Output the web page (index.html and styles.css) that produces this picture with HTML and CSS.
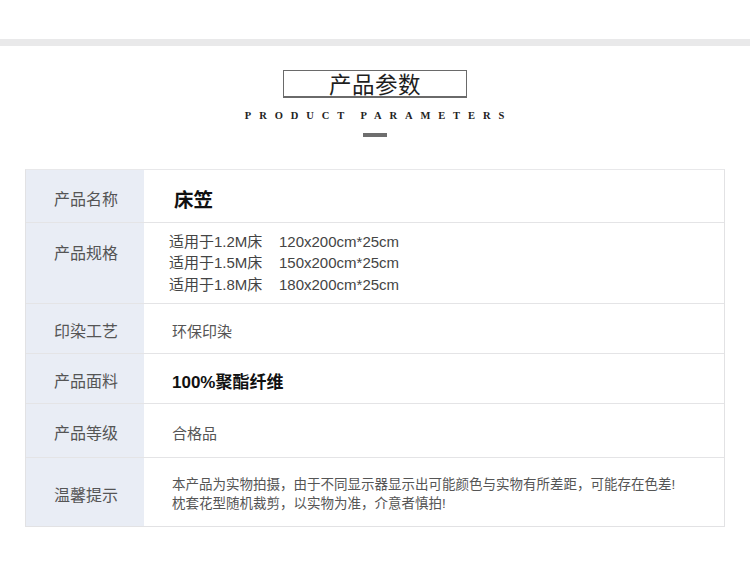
FILE: index.html
```html
<!DOCTYPE html>
<html lang="zh-CN">
<head>
<meta charset="utf-8">
<title>产品参数</title>
<link rel="stylesheet" href="styles.css">
</head>
<body>
<div class="topbar"></div>
<header class="heading">
  <div class="title-box">产品参数</div>
  <div class="subtitle">PRODUCT PARAMETERS</div>
  <div class="dash"></div>
</header>
<section class="table">
  <div class="row row-name">
    <div class="label">产品名称</div>
    <div class="value value-strong">床笠</div>
  </div>
  <div class="row row-spec">
    <div class="label">产品规格</div>
    <div class="value value-spec">
      <div class="spec-line"><span class="spec-bed">适用于1.2M床</span><span>120x200cm*25cm</span></div>
      <div class="spec-line"><span class="spec-bed">适用于1.5M床</span><span>150x200cm*25cm</span></div>
      <div class="spec-line"><span class="spec-bed">适用于1.8M床</span><span>180x200cm*25cm</span></div>
    </div>
  </div>
  <div class="row row-print">
    <div class="label">印染工艺</div>
    <div class="value">环保印染</div>
  </div>
  <div class="row row-fabric">
    <div class="label">产品面料</div>
    <div class="value value-fabric">100%聚酯纤维</div>
  </div>
  <div class="row row-grade">
    <div class="label">产品等级</div>
    <div class="value">合格品</div>
  </div>
  <div class="row row-tip">
    <div class="label">温馨提示</div>
    <div class="value value-tip">本产品为实物拍摄，由于不同显示器显示出可能颜色与实物有所差距，可能存在色差!<br>枕套花型随机裁剪，以实物为准，介意者慎拍!</div>
  </div>
</section>
</body>
</html>
```
FILE: styles.css
```css
* { box-sizing: border-box; }
html, body { margin: 0; padding: 0; background: #fff; }
body {
  width: 750px;
  font-family: "Liberation Sans", "Noto Sans CJK SC", sans-serif;
  color: #555;
}
.topbar {
  margin-top: 39px;
  height: 7px;
  background: #e9e9ea;
}
.heading {
  display: flex;
  flex-direction: column;
  align-items: center;
  padding-top: 24px;
}
.title-box {
  width: 184px;
  height: 28px;
  border: 1px solid #6a6a6a;
  border-bottom-width: 2px;
  display: flex;
  align-items: center;
  justify-content: center;
  font-family: "Noto Sans CJK SC", sans-serif;
  font-weight: 400;
  font-size: 22.5px;
  letter-spacing: 0.5px;
  color: #1e1e1e;
  line-height: 1;
}
.subtitle {
  margin-top: 12px;
  font-family: "Liberation Serif", serif;
  font-weight: bold;
  font-size: 10.5px;
  letter-spacing: 7.9px;
  word-spacing: -2px;
  color: #222;
  line-height: 12px;
  padding-left: 7px;
}
.dash {
  margin-top: 11px;
  width: 24px;
  height: 4px;
  background: #6e6e6e;
}
.table {
  margin: 32px 0 0 25px;
  width: 700px;
  border: 1px solid #e2e2e4;
  border-top-color: #e8e8ea;
  display: flex;
  flex-direction: column;
}
.row {
  display: grid;
  grid-template-columns: 118px 1fr;
  border-top: 1px solid #e4e4e6;
}
.row:first-child { border-top: none; }
.row-name { height: 52px; }
.row-spec { height: 81px; }
.row-print { height: 50px; }
.row-fabric { height: 50px; }
.row-grade { height: 54px; }
.row-tip { height: 69px; }
.label {
  background: #e9edf5;
  display: flex;
  align-items: center;
  justify-content: center;
  font-size: 16px;
  color: #555;
  padding-top: 3px;
  padding-left: 2px;
}
.row-spec .label {
  align-items: flex-start;
  padding-top: 17px;
}
.value {
  display: flex;
  align-items: center;
  padding-left: 28px;
  padding-top: 3px;
  font-size: 15px;
  color: #555;
}
.value-strong {
  font-size: 19.5px;
  font-weight: bold;
  color: #111;
  padding-left: 30px;
  padding-top: 5px;
}
.value-spec {
  flex-direction: column;
  align-items: flex-start;
  justify-content: center;
  padding-left: 25px;
  padding-top: 0;
  color: #444;
  line-height: 21.5px;
}
.spec-bed {
  display: inline-block;
  width: 110px;
}
.value-fabric {
  font-size: 17px;
  font-weight: bold;
  color: #111;
  padding-top: 4px;
}
.value-tip {
  font-size: 13.5px;
  line-height: 19px;
  color: #555;
  padding-top: 3px;
}
```
